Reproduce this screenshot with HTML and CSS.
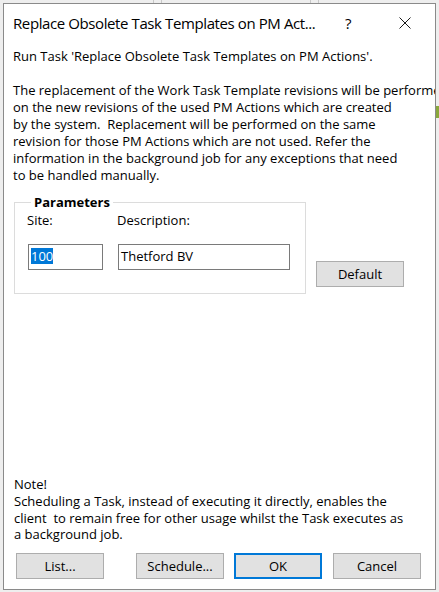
FILE: index.html
```html
<!DOCTYPE html>
<html lang="en">
<head>
  <meta charset="UTF-8">
  <meta name="viewport" content="width=device-width, initial-scale=1.0">
  <title>Replace Obsolete Task Templates on PM Actions</title>
  <link rel="stylesheet" href="styles.css">
</head>
<body>
  <div class="dialog">
    <div class="titlebar">
      <span class="title">Replace Obsolete Task Templates on PM Act...</span>
      <span class="help">?</span>
      <svg class="close" width="12" height="12" viewBox="0 0 12 12">
        <path d="M0.5 0.5 L11.5 11.5 M11.5 0.5 L0.5 11.5" stroke="#1a1a1a" stroke-width="1" fill="none"/>
      </svg>
    </div>

    <div class="info">Run Task 'Replace Obsolete Task Templates on PM Actions'.

The replacement of the Work Task Template revisions will be performed
on the new revisions of the used PM Actions which are created
by the system.  Replacement will be performed on the same
revision for those PM Actions which are not used. Refer the
information in the background job for any exceptions that need
to be handled manually.</div>

    <div class="params-row">
      <fieldset class="params">
        <legend>Parameters</legend>
        <div class="field site">
          <label for="site">Site:</label>
          <div class="input" id="site"><span class="sel">100</span></div>
        </div>
        <div class="field desc">
          <label for="desc">Description:</label>
          <div class="input" id="desc">Thetford BV</div>
        </div>
      </fieldset>
      <button class="btn default-btn">Default</button>
    </div>

    <div class="note">Note!
Scheduling a Task, instead of executing it directly, enables the
client  to remain free for other usage whilst the Task executes as
a background job.</div>

    <div class="buttons">
      <button class="btn">List...</button>
      <button class="btn">Schedule...</button>
      <button class="btn primary">OK</button>
      <button class="btn">Cancel</button>
    </div>
  </div>
</body>
</html>
```

FILE: styles.css
```css
* {
  box-sizing: border-box;
}

body {
  margin: 0;
  padding: 3px 3px 2px 3px;
  width: 439px;
  height: 592px;
  overflow: hidden;
  font-family: "Open Sans", "Noto Sans", sans-serif;
  font-size: 13px;
  color: #000;
  background:
    linear-gradient(#8aa83c, #8aa83c) 436px 106px / 3px 12px no-repeat,
    linear-gradient(#c8c8c8, #c8c8c8) 153px 0 / 1px 3px no-repeat,
    linear-gradient(#c8c8c8, #c8c8c8) 161px 0 / 1px 3px no-repeat,
    linear-gradient(#c8c8c8, #c8c8c8) 310px 0 / 1px 3px no-repeat,
    linear-gradient(#c8c8c8, #c8c8c8) 318px 0 / 1px 3px no-repeat,
    #eeeeee;
}

.dialog {
  width: 433px;
  height: 587px;
  background: #fff;
  border: 1px solid #8a8a8a;
  overflow: hidden;
  display: flex;
  flex-direction: column;
}

.titlebar {
  height: 38px;
  display: flex;
  align-items: center;
  padding-left: 9px;
  font-size: 15px;
  letter-spacing: -0.4px;
  flex-shrink: 0;
}

.title {
  width: 332px;
  white-space: nowrap;
}

.help {
  width: 54px;
}

.close {
  display: block;
}

.info {
  white-space: pre;
  line-height: 17px;
  padding: 6px 0 0 9px;
  height: 152px;
  flex-shrink: 0;
}

.params-row {
  display: flex;
  align-items: flex-start;
  padding-left: 10px;
  flex-shrink: 0;
}

.params {
  margin: 0;
  width: 292px;
  height: 100px;
  border: 1px solid #dcdcdc;
  padding: 0 0 0 13px;
  display: flex;
  gap: 15px;
}

.params legend {
  font-weight: bold;
  padding: 0 3px 0 3px;
  margin-left: 3px;
  line-height: 16px;
}

.field label {
  display: block;
  line-height: 17px;
  margin: 2px 0 0 -1px;
  height: 32px;
}

.input {
  height: 26px;
  border: 1px solid #7a7a7a;
  padding: 3px 2px 0 2px;
  line-height: 17px;
  white-space: nowrap;
}

.site .input {
  width: 75px;
}

.desc .input {
  width: 172px;
}

.sel {
  background: #0078d7;
  color: #fff;
  display: inline-block;
  line-height: 16px;
}

.btn {
  font-family: inherit;
  font-size: 13px;
  width: 88px;
  height: 26px;
  background: #e1e1e1;
  border: 1px solid #adadad;
  color: #000;
  padding: 0;
}

.default-btn {
  margin: 67px 0 0 10px;
}

.note {
  white-space: pre;
  line-height: 16.7px;
  padding: 0 0 0 10px;
  margin-top: auto;
  flex-shrink: 0;
}

.buttons {
  display: flex;
  padding: 10px 0 10px 12px;
  flex-shrink: 0;
}

.buttons .btn:nth-child(2) {
  margin-left: 32px;
}

.buttons .btn:nth-child(3) {
  margin-left: 10px;
}

.buttons .btn:nth-child(4) {
  margin-left: 11px;
}

.primary {
  border: 2px solid #0078d7;
}
```
